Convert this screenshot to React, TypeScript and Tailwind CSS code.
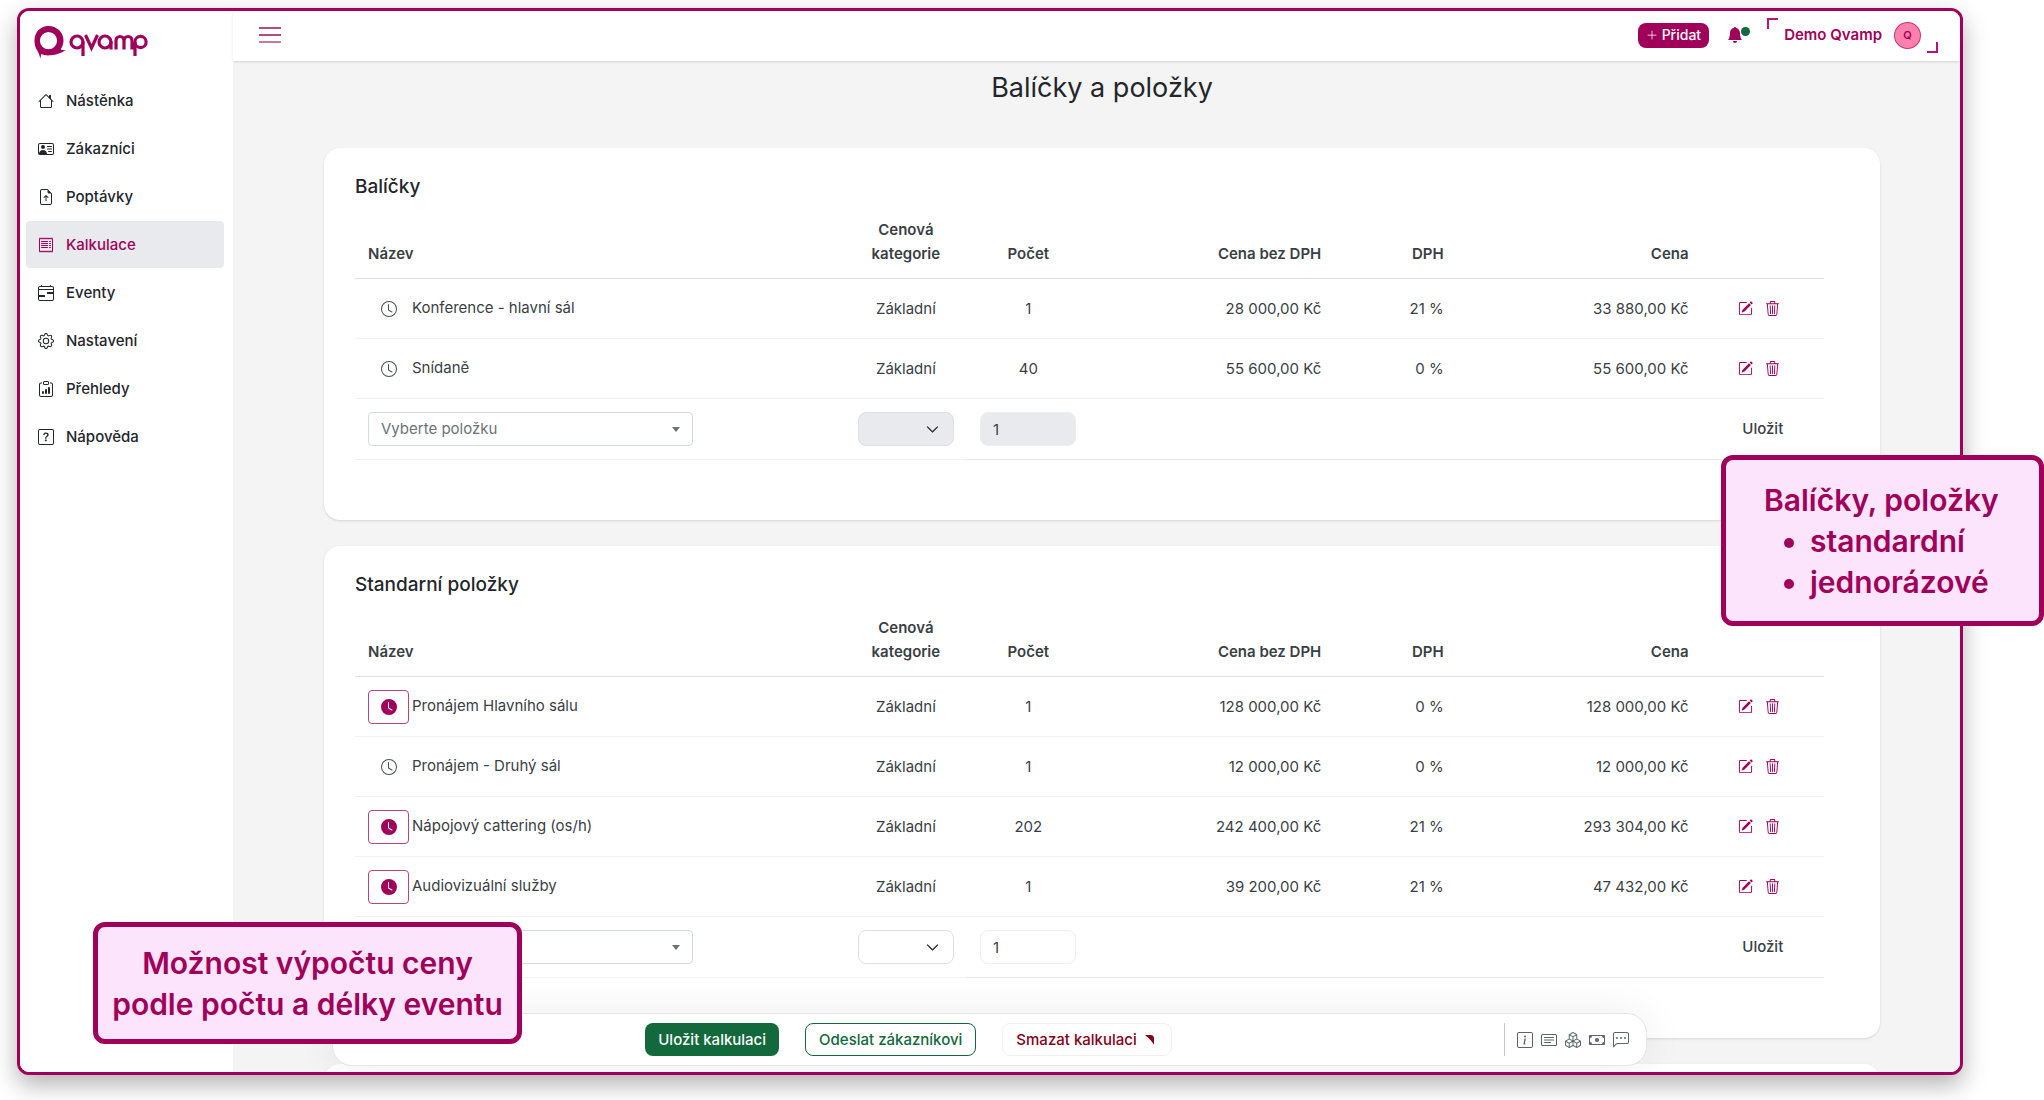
import type { ReactNode } from "react";
import type { IconType } from "react-icons";
import {
  BsBellFill,
  BsBoxes,
  BsCalendar4Range,
  BsCardText,
  BsCash,
  BsChatLeftDots,
  BsChevronDown,
  BsClipboardData,
  BsClock,
  BsClockFill,
  BsFileEarmarkArrowUp,
  BsGear,
  BsHouse,
  BsInfoSquare,
  BsPencilSquare,
  BsPersonVcard,
  BsPlusLg,
  BsQuestionSquare,
  BsReceipt,
  BsTrash3,
} from "react-icons/bs";

type NavItem = { label: string; icon: IconType; active?: boolean };

const navItems: NavItem[] = [
  { label: "Nástěnka", icon: BsHouse },
  { label: "Zákazníci", icon: BsPersonVcard },
  { label: "Poptávky", icon: BsFileEarmarkArrowUp },
  { label: "Kalkulace", icon: BsReceipt, active: true },
  { label: "Eventy", icon: BsCalendar4Range },
  { label: "Nastavení", icon: BsGear },
  { label: "Přehledy", icon: BsClipboardData },
  { label: "Nápověda", icon: BsQuestionSquare },
];

type Item = {
  name: string;
  timed?: boolean;
  count: string;
  net: string;
  vat: string;
  total: string;
};

const packages: Item[] = [
  { name: "Konference - hlavní sál", count: "1", net: "28 000,00 Kč", vat: "21 %", total: "33 880,00 Kč" },
  { name: "Snídaně", count: "40", net: "55 600,00 Kč", vat: "0 %", total: "55 600,00 Kč" },
];

const standardItems: Item[] = [
  { name: "Pronájem Hlavního sálu", timed: true, count: "1", net: "128 000,00 Kč", vat: "0 %", total: "128 000,00 Kč" },
  { name: "Pronájem - Druhý sál", count: "1", net: "12 000,00 Kč", vat: "0 %", total: "12 000,00 Kč" },
  { name: "Nápojový cattering (os/h)", timed: true, count: "202", net: "242 400,00 Kč", vat: "21 %", total: "293 304,00 Kč" },
  { name: "Audiovizuální služby", timed: true, count: "1", net: "39 200,00 Kč", vat: "21 %", total: "47 432,00 Kč" },
];

const tools: { label: string; icon: IconType }[] = [
  { label: "Informace", icon: BsInfoSquare },
  { label: "Poznámka", icon: BsCardText },
  { label: "Položky", icon: BsBoxes },
  { label: "Platby", icon: BsCash },
  { label: "Zprávy", icon: BsChatLeftDots },
];

function Logo() {
  return (
    <a href="#" aria-label="qvamp" className="flex items-center gap-[3px] pl-3.5 text-[#a0005a]">
      <svg viewBox="0 0 32 33" className="h-[33px] w-8" fill="currentColor" aria-hidden="true">
        <path
          fillRule="evenodd"
          d="M14.5 0C6.500 0 .5 6.200.5 14.300c0 4 .7 7 2.300 9.500 1.400 2.200 2.600 5 3.500 8.700.5-1.600.7-3 .7-4.400 2.700 1.200 6.100 1.500 9.500 1.200 5.800-.5 11.500-2.200 15.300-5.300-2 .3-3.800.1-5.200-.8 2-2.500 2.900-5.500 2.900-8.900C29.500 6.200 22.600 0 14.500 0Zm0 6a8.600 8.600 0 1 1 0 17.200 8.600 8.600 0 0 1 0-17.200Z"
        />
      </svg>
      <svg viewBox="0 0 79 24" className="mt-1 h-6 w-[79px]" fill="none" stroke="currentColor" strokeWidth="3.2" aria-hidden="true">
        <circle cx="8" cy="9" r="6" />
        <path d="M14 8.500V23M16.500 2l6 13 6-13" />
        <circle cx="36" cy="9" r="6" />
        <path d="M42 8.500V16.500M47 16.500V7.500a4 4 0 0 1 8 0V16.500M55 7.500a4 4 0 0 1 8 0V16.500M66 9v14" />
        <circle cx="71.500" cy="9" r="5.600" />
      </svg>
    </a>
  );
}

function Sidebar() {
  return (
    <aside className="w-[213px] shrink-0 bg-white pt-[15px]">
      <Logo />
      <nav className="mt-[18px] pr-[9px] pl-1.5">
        <ul className="flex flex-col gap-px">
          {navItems.map(({ label, icon: Icon, active }) => (
            <li key={label}>
              <a
                href="#"
                aria-current={active ? "page" : undefined}
                className={
                  active
                    ? "flex h-[47px] items-center gap-3 rounded-sm bg-[#e9eaee] pl-3 font-medium text-[#a0005a]"
                    : "flex h-[47px] items-center gap-3 rounded-sm pl-3 font-medium text-[#23262b]"
                }
              >
                <Icon className="size-4" aria-hidden="true" />
                {label}
              </a>
            </li>
          ))}
        </ul>
      </nav>
    </aside>
  );
}

function TopBar() {
  return (
    <header className="relative z-10 flex h-[50px] shrink-0 items-center justify-between bg-white pr-[22px] pb-0.5 pl-[26px] shadow-sm">
      <button type="button" aria-label="Nabídka" className="flex flex-col gap-[5px]">
        <span className="h-0.5 w-[22px] bg-[#b24b82]" />
        <span className="h-0.5 w-[22px] bg-[#b24b82]" />
        <span className="h-0.5 w-[22px] bg-[#c67ba2]" />
      </button>
      <div className="flex items-center">
        <button type="button" className="flex h-[25px] items-center gap-1 rounded-lg bg-[#a0005a] px-2 text-sm font-medium text-white">
          <BsPlusLg className="size-3" aria-hidden="true" />
          Přidat
        </button>
        <button type="button" aria-label="Oznámení" className="ml-[18px] flex text-[#a0005a]">
          <BsBellFill className="size-4" aria-hidden="true" />
          <span className="-ml-0.5 size-[9px] rounded-full bg-[#11693c]" />
        </button>
        <button type="button" className="relative ml-[17px] flex h-[35px] items-center gap-3 px-[17px] font-semibold text-[#a0005a]">
          <span className="absolute top-0 left-0 size-[11px] border-t-2 border-l-2 border-[#b5157a]" />
          Demo Qvamp
          <span className="flex size-[27px] items-center justify-center rounded-full border border-[#a0005a]/60 bg-[#ff80ac] text-[11px]">Q</span>
          <span className="absolute right-0 bottom-0 size-[11px] border-r-2 border-b-2 border-[#b5157a]" />
        </button>
      </div>
    </header>
  );
}

function ItemRow({ item }: { item: Item }) {
  return (
    <tr className="h-[60px] border-b border-[#f1f2f3]">
      <td className="px-[13px]">
        <div className="flex items-center gap-[3px]">
          <button
            type="button"
            aria-label="Počítat podle délky"
            className={
              item.timed
                ? "flex h-[34px] w-[41px] items-center justify-center rounded-sm border border-[#b5467f] text-[#a0005a]"
                : "flex h-[34px] w-[41px] items-center justify-center rounded-sm text-[#4b4f55]"
            }
          >
            {item.timed ? <BsClockFill className="size-4" /> : <BsClock className="size-4" />}
          </button>
          <span className="pb-0.5">{item.name}</span>
        </div>
      </td>
      <td className="text-center">Základní</td>
      <td className="text-center">{item.count}</td>
      <td className="px-[13px] text-right">{item.net}</td>
      <td className="px-[13px] text-right">{item.vat}</td>
      <td className="px-[13px] text-right">{item.total}</td>
      <td>
        <div className="flex items-center gap-3 pl-9 text-[#a0005a]">
          <button type="button" aria-label="Upravit">
            <BsPencilSquare className="size-[15px]" />
          </button>
          <button type="button" aria-label="Smazat">
            <BsTrash3 className="size-[15px]" />
          </button>
        </div>
      </td>
    </tr>
  );
}

function NewRow({ disabled }: { disabled?: boolean }) {
  return (
    <tr className="h-[61px]">
      <td className="border-b border-[#f1f2f3] px-[13px]">
        <div className="relative w-[325px]">
          <select
            aria-label="Položka"
            className="block h-[34px] w-full appearance-none rounded-sm border border-[#d5dadd] bg-white px-3 text-[#6c7278]"
          >
            <option>Vyberte položku</option>
          </select>
          <svg viewBox="0 0 8 5" className="pointer-events-none absolute top-[15px] right-[13px] h-[5px] w-2 fill-[#6c7278]" aria-hidden="true">
            <path d="M0 0h8L4 5Z" />
          </svg>
        </div>
      </td>
      <td className="border-b border-[#f1f2f3] px-[13px]">
        <div className="relative">
          <select
            aria-label="Cenová kategorie"
            disabled={disabled}
            className="block h-[34px] w-full appearance-none rounded-lg border border-[#dcdfe3] bg-white disabled:bg-[#e9eaee] disabled:opacity-100"
          />
          <BsChevronDown className="pointer-events-none absolute top-[11px] right-[15px] size-[13px] stroke-1 text-[#33373c]" aria-hidden="true" />
        </div>
      </td>
      <td className="border-b border-[#e4e6e8] px-[13px]">
        <input
          aria-label="Počet"
          defaultValue="1"
          disabled={disabled}
          className="block h-[34px] w-full rounded-lg border border-[#eceef0] bg-white px-3 disabled:bg-[#e9eaee]"
        />
      </td>
      <td className="border-b border-[#e4e6e8]" colSpan={3} />
      <td className="border-b border-[#e4e6e8] text-center">
        <button type="button" className="font-medium">
          Uložit
        </button>
      </td>
    </tr>
  );
}

function ItemsCard({ title, items, disabled }: { title: string; items: Item[]; disabled?: boolean }) {
  return (
    <section className="rounded-2xl bg-white pt-6 pr-14 pb-[60px] pl-[31px] shadow-sm">
      <h2 className="text-[19px] leading-[30px] font-medium text-[#23262b]">{title}</h2>
      <table className="mt-4 w-full table-fixed border-collapse text-[#3a3f45]">
        <colgroup>
          <col className="w-4/12" />
          <col className="w-1/12" />
          <col className="w-1/12" />
          <col className="w-2/12" />
          <col className="w-1/12" />
          <col className="w-2/12" />
          <col className="w-1/12" />
        </colgroup>
        <thead>
          <tr className="border-b border-[#dfe2e5] align-bottom [&>th]:pb-3 [&>th]:font-semibold">
            <th className="px-[13px] text-left">Název</th>
            <th>Cenová kategorie</th>
            <th>Počet</th>
            <th className="px-[13px] text-right">Cena bez DPH</th>
            <th className="px-[13px] text-right">DPH</th>
            <th className="px-[13px] text-right">Cena</th>
            <th aria-label="Akce" />
          </tr>
        </thead>
        <tbody>
          {items.map((item) => (
            <ItemRow key={item.name} item={item} />
          ))}
          <NewRow disabled={disabled} />
        </tbody>
      </table>
    </section>
  );
}

function ActionBar() {
  return (
    <div className="absolute right-[313px] bottom-1.5 left-[99px] flex h-[53px] items-center rounded-[20px] border border-[#e3e5e7] bg-white shadow-[0_0_40px_rgba(0,0,0,0.07)]">
      <div className="flex flex-1 items-center justify-center gap-[26px] pr-5 font-medium">
        <button type="button" className="h-[33px] rounded-lg bg-[#11693c] px-[13px] text-white">
          Uložit kalkulaci
        </button>
        <button type="button" className="h-[33px] rounded-lg border border-[#11693c] px-[13px] text-[#11693c]">
          Odeslat zákazníkovi
        </button>
        <button type="button" className="flex h-[33px] items-center gap-2 rounded-lg border border-[#eff0f1] px-[13px] text-[#86001a]">
          Smazat kalkulaci
          <svg viewBox="0 0 9 10" className="mr-1 h-2.5 w-[9px] fill-current" aria-hidden="true">
            <path d="M0 .3C3 0 6 0 7.500.6 8.700 1.200 9 2.500 9 4v6C7.500 7 4 3 0 .3Z" />
          </svg>
        </button>
      </div>
      <div className="flex h-[33px] items-center gap-2 border-l border-[#c3c7cc] pr-[17px] pl-3 text-[#5b6472]">
        {tools.map(({ label, icon: Icon }) => (
          <button key={label} type="button" aria-label={label}>
            <Icon className="size-4" />
          </button>
        ))}
      </div>
    </div>
  );
}

function Callout({ className, children }: { className: string; children: ReactNode }) {
  return (
    <div
      className={
        "absolute flex flex-col justify-center rounded-xl border-5 border-[#a0005a] bg-[#fde4fd] pt-0.5 text-[30px] leading-[41px] font-semibold text-[#a0005a] " +
        className
      }
    >
      {children}
    </div>
  );
}

export default function App() {
  return (
    <div className="relative h-screen overflow-hidden bg-white pt-2 pr-[81px] pb-[25px] pl-[17px] font-['Inter','Noto_Sans',sans-serif] text-[15px] leading-6">
      <div className="flex h-full overflow-hidden rounded-xl border-3 border-[#a0005a] bg-white shadow-[0_10px_24px_rgba(0,0,0,0.3)]">
        <Sidebar />
        <div className="relative flex min-w-0 flex-1 flex-col">
          <TopBar />
          <main className="min-h-0 flex-1 overflow-hidden bg-[#f4f4f4] pt-[9px] pr-20 pl-[91px]">
            <h1 className="text-center text-[27px] leading-9 text-[#23262b]">Balíčky a položky</h1>
            <div className="mt-[42px] flex flex-col gap-[26px]">
              <ItemsCard title="Balíčky" items={packages} disabled />
              <ItemsCard title="Standarní položky" items={standardItems} />
              <section className="h-40 rounded-2xl bg-white shadow-sm" />
            </div>
          </main>
          <ActionBar />
        </div>
      </div>
      <Callout className="top-[455px] right-0 h-[171px] w-[323px] pl-[38px]">
        <p>Balíčky, položky</p>
        <ul className="list-disc pl-[46px]">
          <li>standardní</li>
          <li>jednorázové</li>
        </ul>
      </Callout>
      <Callout className="bottom-14 left-[93px] h-[122px] w-[429px] text-center">
        <p>
          Možnost výpočtu ceny
          <br />
          podle počtu a délky eventu
        </p>
      </Callout>
    </div>
  );
}
